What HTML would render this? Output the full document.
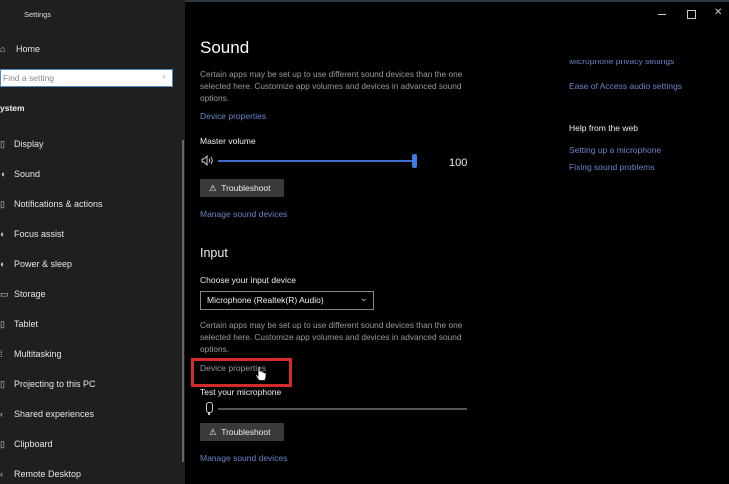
<!DOCTYPE html>
<html><head><style>
body{margin:0;width:729px;height:484px;background:#000;position:relative;overflow:hidden;font-family:"Liberation Sans",sans-serif;color:#fff}
.a{position:absolute;white-space:nowrap}
#side{position:absolute;left:0;top:0;width:185px;height:484px;background:#1f1f1f}
.it{position:absolute;left:14px;font-size:9px;color:#e6e6e6}
.ic{position:absolute;left:0;font-size:9px;color:#ccc}
.p{font-size:8.3px;color:#9a9a9a;line-height:12px}
.lk{font-size:8.5px;color:#6b84c8}
.btn{position:absolute;background:#3a3a3a;height:18px;width:84px;font-size:8.5px;color:#eee;line-height:18px}
</style></head><body>
<div style="position:absolute;left:0;top:0;width:729px;height:2px;background:#2b3a40"></div>
<div id="side">
<div class="a" style="left:24px;top:10px;font-size:7.5px;color:#ddd">Settings</div>
<div class="ic a" style="top:44px">⌂</div>
<div class="it a" style="left:16px;top:44px">Home</div>
<div style="position:absolute;left:0;top:69px;width:173px;height:18px;background:#fff;border:1px solid #4a8ab8;box-sizing:border-box"></div>
<div class="a" style="left:3px;top:73px;font-size:8.5px;color:#888">Find a setting</div>
<div class="a" style="left:162px;top:72px;font-size:8px;color:#999">⌕</div>
<div class="a" style="left:0;top:103px;font-size:8.5px;font-weight:bold;color:#eee">ystem</div>
<div class="it a" style="top:139px">Display</div>
<div class="it a" style="top:169px">Sound</div>
<div class="it a" style="top:199px">Notifications &amp; actions</div>
<div class="it a" style="top:229px">Focus assist</div>
<div class="it a" style="top:259px">Power &amp; sleep</div>
<div class="it a" style="top:289px">Storage</div>
<div class="it a" style="top:319px">Tablet</div>
<div class="it a" style="top:349px">Multitasking</div>
<div class="it a" style="top:379px">Projecting to this PC</div>
<div class="it a" style="top:409px">Shared experiences</div>
<div class="it a" style="top:439px">Clipboard</div>
<div class="it a" style="top:469px">Remote Desktop</div>
<div class="ic a" style="top:139px">▯</div><div class="ic a" style="top:169px">◖</div><div class="ic a" style="top:199px">▯</div><div class="ic a" style="top:229px">◐</div><div class="ic a" style="top:259px">◐</div><div class="ic a" style="top:289px">▭</div><div class="ic a" style="top:319px">▯</div><div class="ic a" style="top:349px">⁞</div><div class="ic a" style="top:379px">▯</div><div class="ic a" style="top:409px">‹</div><div class="ic a" style="top:439px">▯</div><div class="ic a" style="top:469px">‹</div>
<div style="position:absolute;left:182px;top:140px;width:2px;height:322px;background:#666"></div>
</div>
<div class="a" style="left:200px;top:38px;font-size:17px;color:#fff">Sound</div>
<div class="a p" style="left:200px;top:68px">Certain apps may be set up to use different sound devices than the one<br>selected here. Customize app volumes and devices in advanced sound<br>options.</div>
<div class="a lk" style="left:200px;top:111px">Device properties</div>
<div class="a" style="left:200px;top:136px;font-size:8.5px;color:#eee">Master volume</div>
<svg style="position:absolute;left:201px;top:155px" width="14" height="11" viewBox="0 0 14 11" fill="none" stroke="#ccc" stroke-width="1"><path d="M1 4h2l3-3v9l-3-3H1z"/><path d="M8 3.5q1.5 2 0 4M10 2q2.5 3.5 0 7"/></svg>
<div style="position:absolute;left:218px;top:160px;width:197px;height:2px;background:#3d6fd0"></div>
<div style="position:absolute;left:412px;top:154px;width:5px;height:14px;border-radius:2px;background:#3d7ee0"></div>
<div class="a" style="left:449px;top:157px;font-size:11px;color:#eee">100</div>
<div class="btn" style="left:200px;top:179px"><span style="margin-left:9px">⚠</span>&nbsp; Troubleshoot</div>
<div class="a lk" style="left:200px;top:209px">Manage sound devices</div>
<div class="a" style="left:200px;top:246px;font-size:12.5px;color:#eee">Input</div>
<div class="a" style="left:200px;top:275px;font-size:8.5px;color:#eee">Choose your input device</div>
<div style="position:absolute;left:200px;top:291px;width:174px;height:19px;border:1px solid #888;box-sizing:border-box"></div>
<div class="a" style="left:207px;top:295px;font-size:8.5px;color:#eee">Microphone (Realtek(R) Audio)</div>
<div class="a" style="left:360px;top:293px;font-size:9px;color:#ccc">⌄</div>
<div class="a p" style="left:200px;top:319px">Certain apps may be set up to use different sound devices than the one<br>selected here. Customize app volumes and devices in advanced sound<br>options.</div>
<div class="a" style="left:200px;top:363px;font-size:8.5px;color:#9a9a9a">Device properties</div>
<div style="position:absolute;left:191px;top:358px;width:101px;height:29px;border:3px solid #d42a2a;box-sizing:border-box"></div>
<svg style="position:absolute;left:255px;top:367px" width="12" height="15" viewBox="0 0 12 15"><path d="M3 1.5v7.5l-1.5-1.5q-1.5 0-0.5 1.5l3 4.5h6l1-4v-3q0-1-1-1t-1 1v-1q0-1-1-1t-1 1v-1q0-1-1-1t-1 1v-4q0-1-1-1t-1 1z" fill="#fff" stroke="#000" stroke-width="0.8"/></svg>
<div class="a" style="left:200px;top:387px;font-size:8.5px;color:#eee">Test your microphone</div>
<div style="position:absolute;left:206px;top:402px;width:5px;height:9px;border:1px solid #ccc;border-radius:3px"></div>
<div style="position:absolute;left:208px;top:412px;width:2px;height:3px;background:#ccc"></div>
<div style="position:absolute;left:218px;top:408px;width:249px;height:2px;background:#555"></div>
<div class="btn" style="left:200px;top:423px"><span style="margin-left:9px">⚠</span>&nbsp; Troubleshoot</div>
<div class="a lk" style="left:200px;top:453px">Manage sound devices</div>
<div class="a lk" style="left:569px;top:56px;clip-path:inset(4px 0 0 0)">Microphone privacy settings</div>
<div class="a lk" style="left:569px;top:81px">Ease of Access audio settings</div>
<div class="a" style="left:569px;top:123px;font-size:8.5px;color:#eee">Help from the web</div>
<div class="a lk" style="left:569px;top:145px">Setting up a microphone</div>
<div class="a lk" style="left:569px;top:162px">Fixing sound problems</div>
<div style="position:absolute;left:658px;top:14px;width:8px;height:1px;background:#ccc"></div>
<div style="position:absolute;left:687px;top:10px;width:7px;height:7px;border:1px solid #ccc"></div>
<div class="a" style="left:714px;top:7px;font-size:10px;color:#ccc">✕</div>
</body></html>
